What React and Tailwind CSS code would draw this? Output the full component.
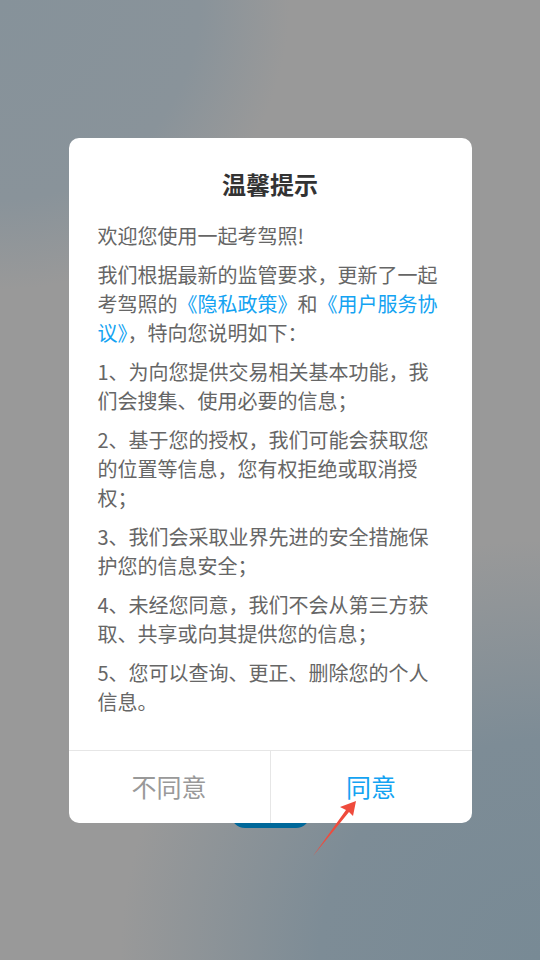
import React from 'react'

const font = { fontFamily: '"Noto Sans CJK SC", "Noto Sans", sans-serif' }

const paragraphs = [
  '1、为向您提供交易相关基本功能，我们会搜集、使用必要的信息；',
  '2、基于您的授权，我们可能会获取您的位置等信息，您有权拒绝或取消授权；',
  '3、我们会采取业界先进的安全措施保护您的信息安全；',
  '4、未经您同意，我们不会从第三方获取、共享或向其提供您的信息；',
  '5、您可以查询、更正、删除您的个人信息。',
]

// Privacy consent dialog over a dimmed splash page
const App = () => {
  return (
    <div
      className="relative w-[540px] h-[960px] overflow-hidden bg-[#999999] bg-[radial-gradient(circle_at_0%_0%,#86929a_0px,#89939a_200px,transparent_290px),radial-gradient(circle_at_100%_100%,#788a95_0px,#7d8c96_220px,transparent_420px)]"
      style={font}
    >
      {/* button on the page underneath */}
      <div className="absolute left-[231px] top-[780px] w-[79px] h-[48px] rounded-[14px] bg-[#00689a]" />

      <div className="relative flex justify-center pt-[138px]">
        <div className="w-[403px] bg-white rounded-[10px] overflow-hidden">
          <h1 className="pt-[28px] text-center text-[24px] leading-[36px] font-bold text-[#333333]">温馨提示</h1>

          <div className="mt-[19px] px-[29px] pb-[34px] flex flex-col gap-[10px] text-[20px] leading-[29px] text-[#666666]">
            <p>欢迎您使用一起考驾照!</p>
            <p>
              我们根据最新的监管要求，更新了一起考驾照的
              <span className="text-[#14a3f2]">《隐私政策》</span>和
              <span className="text-[#14a3f2]">《用户服务协议》</span>，特向您说明如下：
            </p>
            {paragraphs.map((t) => (
              <p key={t}>{t}</p>
            ))}
          </div>

          <div className="flex h-[73px] border-t border-[#e6e6e6]">
            <button className="flex-1 flex items-center justify-center text-[25px] text-[#999999] border-r border-[#e6e6e6]">
              不同意
            </button>
            <button className="flex-1 flex items-center justify-center text-[25px] text-[#14a3f2]">
              同意
            </button>
          </div>
        </div>
      </div>

      {/* red annotation arrow */}
      <svg className="absolute inset-0 pointer-events-none" width="540" height="960" viewBox="0 0 540 960">
        <polygon points="356,801 340,807 346,810 313,856 349,812 353,816" fill="#ef4b3c" />
      </svg>
    </div>
  )
}

export default App
